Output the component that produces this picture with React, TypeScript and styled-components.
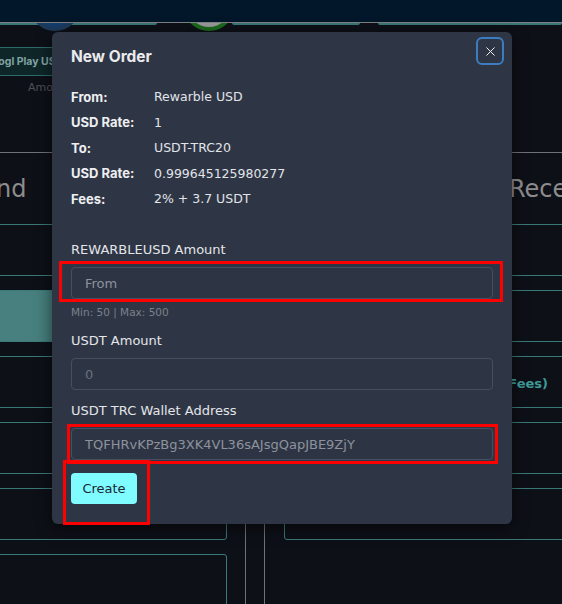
import React from 'react'
import styled, { createGlobalStyle } from 'styled-components'
import { X } from 'lucide-react'

const GlobalStyle = createGlobalStyle`
  html, body {
    margin: 0;
    padding: 0;
    background: #0d1017;
    font-family: "DejaVu Sans", "Liberation Sans", sans-serif;
  }
  * { box-sizing: border-box; }
`

const teal = '#3b7878'
const grey = '#6f7276'
const boldFont = 'Inter, "DejaVu Sans", sans-serif'

/* ---------- page behind the dialog ---------- */

const Page = styled.div`
  position: relative;
  width: 562px;
  height: 604px;
  overflow: hidden;
  background: #0d1017;
`

const Nav = styled.div`
  position: relative;
  z-index: 1;
  height: 23px;
  background: #02172a;
  border-bottom: 1px solid #7d8184;
`

const Products = styled.div`
  position: relative;
  display: flex;
  gap: 18px;
  height: 129px;
  margin-left: -27px;
  overflow: hidden;
`

const Product = styled.div`
  position: relative;
  width: 187px;
  display: flex;
  flex-direction: column;
  align-items: flex-start;
`

const Shelf = styled.div<{ $from?: number }>`
  width: calc(100% - ${({ $from }) => $from || 0}px);
  margin-left: ${({ $from }) => $from || 0}px;
  height: 2px;
  border-bottom: 2px solid ${teal};
  border-radius: 0 0 6px 6px;
`

const Coin = styled.div<{ $bg: string; $ring: string; $left: number }>`
  position: absolute;
  top: -40px;
  left: ${({ $left }) => $left}px;
  width: 50px;
  height: 48px;
  border-radius: 50%;
  background: ${({ $bg }) => $bg};
  border: 4px solid ${({ $ring }) => $ring};
`

const Tag = styled.div`
  margin-top: 22px;
  padding: 7px 10px;
  border: 1px solid #2d6a6a;
  border-radius: 3px;
  background: #0f2628;
  color: #7fa3a3;
  font-family: ${boldFont};
  font-size: 10.5px;
  font-weight: 700;
  white-space: nowrap;
`

const Amount = styled.div`
  margin: 5px 0 0 55px;
  color: #4d5055;
  font-size: 11px;
`

const Columns = styled.div`
  display: grid;
  grid-template-columns: 474px 474px;
  gap: 18px;
  margin-left: -228px;
`

const SideCard = styled.div`
  border: 1px solid ${grey};
  border-radius: 4px;
  padding: 0 18px 26px 19px;
  display: flex;
  flex-direction: column;
  gap: 14px;
`

const SideTitle = styled.div<{ $indent: number }>`
  height: 57px;
  padding: 24px 0 0 ${({ $indent }) => $indent}px;
  color: #8d8d8d;
  font-size: 24px;
  line-height: 24px;
  white-space: nowrap;
`

const Slot = styled.div<{ $filled?: boolean }>`
  height: 52px;
  border: 1px solid ${teal};
  border-radius: 3px;
  background: ${({ $filled }) =>
    $filled ? 'linear-gradient(90deg, #4f8d8b, #3f7473)' : 'transparent'};
  display: flex;
  align-items: center;
  justify-content: flex-end;
  padding: 3px 170px 0 0;
  color: #3f9a98;
  font-size: 13px;
  font-weight: 700;
  white-space: nowrap;
`

/* ---------- dialog ---------- */

const Layer = styled.div`
  position: absolute;
  inset: 0;
  z-index: 2;
  display: flex;
  justify-content: flex-start;
  align-items: flex-start;
  padding: 32px 0 0 52px;
`

const Modal = styled.div`
  position: relative;
  width: 460px;
  background: #2e3646;
  border-radius: 6px;
  box-shadow: 0 4px 16px rgba(0, 0, 0, 0.55);
  padding: 0 19px 20px 19px;
  color: #e6e7ea;
`

const Header = styled.div`
  display: flex;
  justify-content: space-between;
  align-items: flex-start;
  padding-top: 5px;
  margin-right: -11px;
`

const Title = styled.h2`
  margin: 8px 0 0 0;
  font-family: ${boldFont};
  font-size: 15.5px;
  line-height: 24px;
  font-weight: 700;
  color: #ebebed;
`

const CloseButton = styled.button`
  width: 28px;
  height: 28px;
  padding: 0;
  display: flex;
  align-items: center;
  justify-content: center;
  background: transparent;
  border: 2px solid #3c7dc0;
  border-radius: 6px;
  color: #f2f2f2;
`

const Details = styled.div`
  display: grid;
  grid-template-columns: 83px auto;
  grid-auto-rows: 25.5px;
  align-items: center;
  margin-top: 15px;
  font-size: 12.5px;
`

const Term = styled.div`
  font-family: ${boldFont};
  font-size: 13px;
  font-weight: 700;
  color: #eeeff1;
`

const Value = styled.div`
  color: #e2e4e8;
`

const Field = styled.div<{ $gap: number }>`
  display: flex;
  flex-direction: column;
  margin-top: ${({ $gap }) => $gap}px;
`

const Label = styled.label`
  font-size: 13px;
  line-height: 20px;
  color: #e4e5e8;
  margin-bottom: 7px;
`

const Input = styled.input`
  height: 32px;
  width: 100%;
  padding: 0 13px;
  border: 1px solid #464e5f;
  border-radius: 4px;
  background: #2d3545;
  color: #8d929c;
  font-family: inherit;
  font-size: 13px;
  outline: none;

  &::placeholder {
    color: #8d929c;
  }
  &:disabled {
    color: #6b717c;
  }
`

const Hint = styled.div`
  margin-top: 6px;
  font-size: 10.5px;
  line-height: 14px;
  color: #7c818a;
`

const Create = styled.button`
  margin-top: 13px;
  width: 66px;
  height: 31px;
  border: none;
  border-radius: 4px;
  background: #7efcff;
  color: #1d2433;
  font-family: inherit;
  font-size: 13px;
  font-weight: 500;
`

const Marker = styled.div<{ $l: number; $t: number; $w: number; $h: number }>`
  position: absolute;
  left: ${({ $l }) => $l}px;
  top: ${({ $t }) => $t}px;
  width: ${({ $w }) => $w}px;
  height: ${({ $h }) => $h}px;
  border: 3px solid #ff0000;
  pointer-events: none;
`

const details: [string, string][] = [
  ['From:', 'Rewarble USD'],
  ['USD Rate:', '1'],
  ['To:', 'USDT-TRC20'],
  ['USD Rate:', '0.999645125980277'],
  ['Fees:', '2% + 3.7 USDT'],
]

export default function App() {
  return (
    <>
      <GlobalStyle />
      <Page>
        <Nav />
        <Products>
          <Product>
            <Shelf />
            <Coin $bg="#163c6a" $ring="#1d3a5c" $left={57} />
            <Tag>Googl Play USD</Tag>
            <Amount>Amount</Amount>
          </Product>
          <Product>
            <Shelf $from={57} />
            <Coin $bg="#9a9a9a" $ring="#1c6a1c" $left={9} />
            <Tag>Rewarble USD</Tag>
            <Amount>Amount</Amount>
          </Product>
          <Product>
            <Shelf />
          </Product>
        </Products>
        <Columns>
          <SideCard>
            <SideTitle $indent={174}>Send</SideTitle>
            <Slot />
            <Slot $filled />
            <Slot />
            <Slot />
            <Slot />
            <Slot />
          </SideCard>
          <SideCard>
            <SideTitle $indent={225}>Receive</SideTitle>
            <Slot />
            <Slot />
            <Slot>You Receive (Including Fees)</Slot>
            <Slot />
            <Slot />
          </SideCard>
        </Columns>

        <Layer>
          <Modal>
            <Header>
              <Title>New Order</Title>
              <CloseButton aria-label="Close">
                <X size={15} strokeWidth={1.6} />
              </CloseButton>
            </Header>
            <Details>
              {details.map(([term, value], i) => (
                <React.Fragment key={i}>
                  <Term>{term}</Term>
                  <Value>{value}</Value>
                </React.Fragment>
              ))}
            </Details>
            <Field $gap={28.5}>
              <Label>REWARBLEUSD Amount</Label>
              <Input placeholder="From" />
              <Hint>Min: 50 | Max: 500</Hint>
            </Field>
            <Field $gap={12}>
              <Label>USDT Amount</Label>
              <Input value="0" disabled readOnly />
            </Field>
            <Field $gap={11}>
              <Label>USDT TRC Wallet Address</Label>
              <Input defaultValue="TQFHRvKPzBg3XK4VL36sAJsgQapJBE9ZjY" />
            </Field>
            <Create>Create</Create>

            <Marker $l={7} $t={229} $w={444} $h={41} />
            <Marker $l={15} $t={392} $w={431} $h={40} />
            <Marker $l={11} $t={428} $w={87} $h={65} />
          </Modal>
        </Layer>
      </Page>
    </>
  )
}
